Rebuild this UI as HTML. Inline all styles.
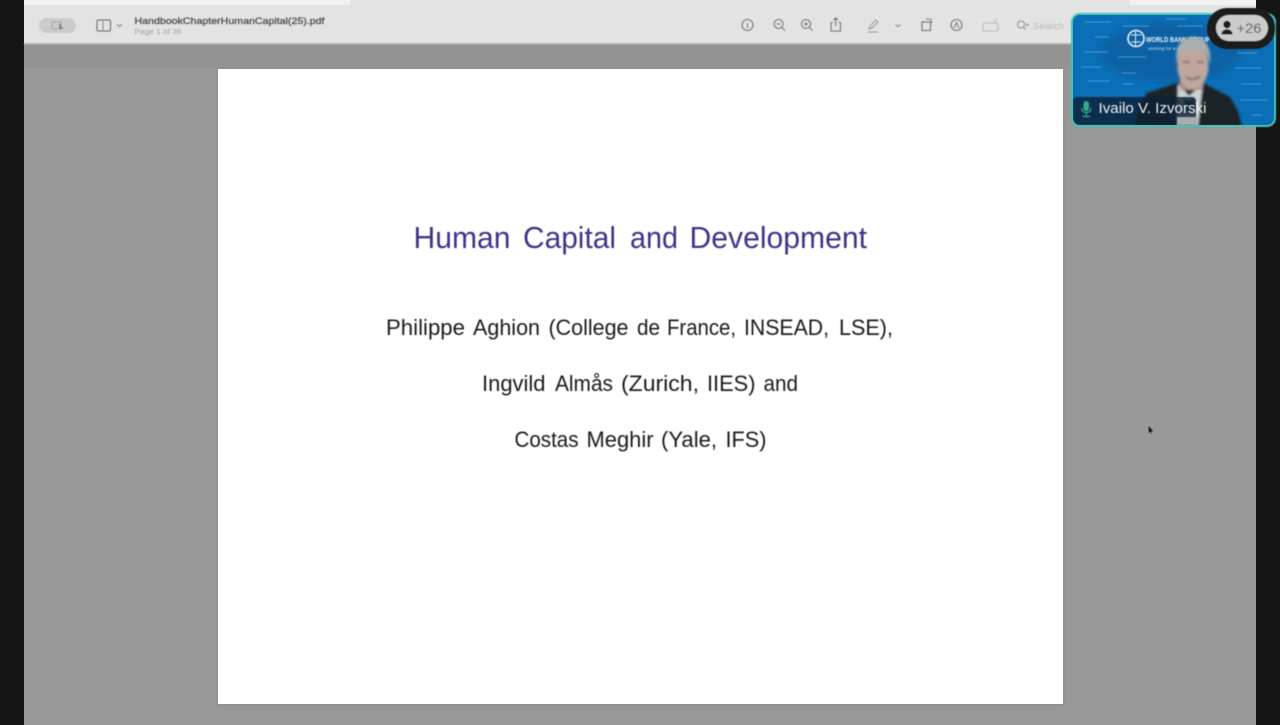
<!DOCTYPE html>
<html><head><meta charset="utf-8"><style>
html,body{margin:0;padding:0;background:#151515;width:1280px;height:725px;overflow:hidden}
svg{display:block}
text{font-family:"Liberation Sans",sans-serif}
.t{font-size:31px;fill:#3d3689}
.b{font-size:22.5px;fill:#1a1a1a}
</style></head><body>
<svg width="1280" height="725" viewBox="0 0 1280 725" xmlns="http://www.w3.org/2000/svg">
<defs>
<filter id="b1" x="-20%" y="-20%" width="140%" height="140%"><feGaussianBlur stdDeviation="0.5"/></filter>
<filter id="bt" x="-5%" y="-20%" width="110%" height="140%"><feGaussianBlur stdDeviation="0.42"/></filter>
<filter id="b2" x="-20%" y="-20%" width="140%" height="140%"><feGaussianBlur stdDeviation="1.4"/></filter>
<filter id="b3" x="-20%" y="-20%" width="140%" height="140%"><feGaussianBlur stdDeviation="3"/></filter>
<filter id="bs" x="-2%" y="-2%" width="104%" height="104%"><feGaussianBlur stdDeviation="1"/></filter>
<clipPath id="tile"><rect x="1073" y="15" width="201" height="110" rx="7"/></clipPath>
</defs>
<rect width="1280" height="725" fill="#151515"/>
<rect x="24" y="0" width="1232" height="725" fill="#989898"/>
<rect x="24" y="44" width="1232" height="24" fill="#939393"/>
<rect x="24" y="0" width="1232" height="6" fill="#f1f1f1"/>
<rect x="350" y="0" width="780" height="6" fill="#e4e4e4"/>
<rect x="24" y="5" width="1232" height="39" fill="#e3e3e3"/>
<rect x="24" y="43" width="1232" height="1.5" fill="#b5b5b5" filter="url(#b1)"/>
<rect x="217" y="68" width="847" height="637.500" fill="#8c8c8c" filter="url(#bs)"/>
<rect x="218" y="69" width="845" height="635" fill="#ffffff"/>

<g filter="url(#b1)">
<rect x="39" y="18" width="37" height="15" rx="7.500" fill="#cbcbcb"/>
<rect x="52" y="22" width="9" height="7" fill="none" stroke="#a5a5a5"/>
<path d="M60 24v4h3" stroke="#666" stroke-width="1.300" fill="none"/>
<rect x="97" y="20" width="13.500" height="11" rx="1.500" fill="none" stroke="#666" stroke-width="1"/>
<path d="M103 20v11" stroke="#888" stroke-width="1"/>
<path d="M117 24.500l2.500 2 2.500-2" stroke="#777" stroke-width="1" fill="none"/>
<text x="134.500" y="24" font-size="9.500" fill="#4a4a4a" stroke="#4a4a4a" stroke-width=".25" textLength="190" lengthAdjust="spacingAndGlyphs">HandbookChapterHumanCapital(25).pdf</text>
<text x="134.500" y="34" font-size="7.500" fill="#a0a0a0" textLength="47" lengthAdjust="spacingAndGlyphs">Page 1 of 36</text>

<g fill="none" stroke="#777" stroke-width="1.100">
<circle cx="747.500" cy="25" r="5.500"/>
<path d="M747.500 23v5" stroke-width="1"/>
<circle cx="778.500" cy="24" r="4.500"/><path d="M782 27.500l3 3M776.500 24h4"/>
<circle cx="806" cy="24" r="4.500"/><path d="M809.500 27.500l3 3M804 24h4M806 22v4"/>
<path d="M833 22.500h-2v8.500h9.500v-8.500h-2M835.700 26v-8M833.500 20l2.200-2.200 2.200 2.200"/>
<path d="M869 29l1-3 6-6 2 2-6 6zM868 32h10" stroke="#999"/>
<path d="M895.500 24.500l2.500 2 2.500-2" stroke="#888"/>
<rect x="922" y="22" width="8.500" height="8.500"/>
<path d="M926 19h4l1.500 1.500V23" stroke="#888"/>
<circle cx="956.500" cy="25" r="5.500"/>
<path d="M954 28l2.500-5.500L959 28" stroke-width="1"/>
<rect x="983" y="23" width="15" height="8" rx="1" stroke="#bbb"/>
<path d="M994 22l3-3" stroke="#bbb"/>
<circle cx="1021" cy="24.500" r="3.500" stroke="#939393"/>
<path d="M1023.500 27l2.500 2.500M1026 24l1.500 1.500 1.500-1.500" stroke="#939393"/>
</g>
<text x="1033" y="29" font-size="9" fill="#bcbcbc" textLength="31" lengthAdjust="spacingAndGlyphs">Search</text>
</g>

<g filter="url(#bt)">
<text class="t" x="413.500" y="248" textLength="97" lengthAdjust="spacingAndGlyphs">Human</text>
<text class="t" x="523" y="248" textLength="93" lengthAdjust="spacingAndGlyphs">Capital</text>
<text class="t" x="630" y="248" textLength="48" lengthAdjust="spacingAndGlyphs">and</text>
<text class="t" x="689.500" y="248" textLength="177.500" lengthAdjust="spacingAndGlyphs">Development</text>

<text class="b" x="386" y="335" textLength="79" lengthAdjust="spacingAndGlyphs">Philippe</text>
<text class="b" x="473" y="335" textLength="67" lengthAdjust="spacingAndGlyphs">Aghion</text>
<text class="b" x="548.500" y="335" textLength="80" lengthAdjust="spacingAndGlyphs">(College</text>
<text class="b" x="637" y="335" textLength="23" lengthAdjust="spacingAndGlyphs">de</text>
<text class="b" x="667" y="335" textLength="69" lengthAdjust="spacingAndGlyphs">France,</text>
<text class="b" x="744" y="335" textLength="85" lengthAdjust="spacingAndGlyphs">INSEAD,</text>
<text class="b" x="839" y="335" textLength="54" lengthAdjust="spacingAndGlyphs">LSE),</text>

<text class="b" x="482" y="391" textLength="63.500" lengthAdjust="spacingAndGlyphs">Ingvild</text>
<text class="b" x="555" y="391" textLength="58" lengthAdjust="spacingAndGlyphs">Almås</text>
<text class="b" x="621" y="391" textLength="78" lengthAdjust="spacingAndGlyphs">(Zurich,</text>
<text class="b" x="707" y="391" textLength="48.500" lengthAdjust="spacingAndGlyphs">IIES)</text>
<text class="b" x="763.500" y="391" textLength="34.500" lengthAdjust="spacingAndGlyphs">and</text>

<text class="b" x="514.500" y="447" textLength="64" lengthAdjust="spacingAndGlyphs">Costas</text>
<text class="b" x="586.500" y="447" textLength="67" lengthAdjust="spacingAndGlyphs">Meghir</text>
<text class="b" x="661" y="447" textLength="56" lengthAdjust="spacingAndGlyphs">(Yale,</text>
<text class="b" x="725.500" y="447" textLength="41" lengthAdjust="spacingAndGlyphs">IFS)</text>
</g>

<path d="M1148 424.500v10l2.200-2 1.400 3 1.400-.7-1.300-2.900h3z" fill="#111" stroke="#cfcfcf" stroke-width=".5" filter="url(#b1)"/>

<!-- video tile -->
<rect x="1071" y="13" width="205" height="114" rx="9" fill="#45c2b2" filter="url(#b1)"/>
<g clip-path="url(#tile)">
<rect x="1073" y="15" width="201" height="110" fill="#0b6fb7"/>
<ellipse cx="1170" cy="52" rx="70" ry="30" fill="#0a62a5" filter="url(#b3)"/>
<g stroke="#4c9fd6" stroke-width="1.200" filter="url(#b1)" opacity=".8">
<path d="M1084 22h27M1123 26h26M1166 19h20M1095 37h14M1084 52h24M1118 57h28M1081 67h20M1122 73h14M1088 81h22M1122 84h12M1237 53h20M1235 68h26M1241 84h20M1240 100h28M1252 115h10M1177 26h26"/>
</g>
<circle cx="1136" cy="38.500" r="8" fill="none" stroke="#e8f3fa" stroke-width="1.600" filter="url(#b1)"/>
<path d="M1131 35h10M1131 42h10M1135.500 31v15" stroke="#dcecf7" stroke-width="1" filter="url(#b1)"/>
<text x="1146" y="42" font-size="7.500" font-weight="700" fill="#e6f1f8" textLength="64" lengthAdjust="spacingAndGlyphs" filter="url(#b1)">WORLD BANK GROUP</text>
<text x="1148" y="50" font-size="4.500" fill="#bcd9ec" textLength="50" lengthAdjust="spacingAndGlyphs" filter="url(#b1)">working for a world free</text>
<g filter="url(#b2)">
<path d="M1135 126l4-20 8-13 30-10h26l27 14 8 14 4 15z" fill="#1d2227"/>
<path d="M1178 84l11 12 14-12-2 14-3 27h-21z" fill="#d0d3d4"/>
<path d="M1184 97l5 4 5-4 2 14h-12z" fill="#2a2c30"/>
<rect x="1180" y="74" width="22" height="16" fill="#ab938a"/>
<ellipse cx="1193" cy="66" rx="15.500" ry="23" fill="#bfa69c"/>
<path d="M1177 64c-3-18 5-27 16-27s19 9 17 27c-2-7-3-12-7-14-8 1-16 1-20 0-3 3-5 8-6 14z" fill="#a9afb1"/>
<path d="M1186 77c4 3 10 3 14-1" stroke="#7b5b52" stroke-width="1.800" fill="none"/>
<path d="M1183 62h7M1197 62h7" stroke="#7a6660" stroke-width="1.800"/>
</g>
<rect x="1073" y="97" width="123" height="28" rx="4" fill="#0a2238" opacity=".82" filter="url(#b1)"/>
<rect x="1177" y="117" width="21" height="8" fill="#a9adad" filter="url(#b1)"/>
</g>
<g filter="url(#b1)">
<rect x="1083.500" y="101" width="5.500" height="10" rx="2.700" fill="#31ab88"/>
<path d="M1081.500 108c0 6 9.500 6 9.500 0M1086.300 113v3M1082.500 116.500h7.500" stroke="#31ab88" stroke-width="1.200" fill="none"/>
<text x="1098.500" y="113" font-size="14.500" fill="#eef3f6" textLength="108" lengthAdjust="spacingAndGlyphs">Ivailo V. Izvorski</text>
</g>
<g filter="url(#b1)">
<rect x="1207" y="8" width="68" height="41" rx="20" fill="#1a1a1a"/>
<rect x="1216" y="15" width="52" height="26" rx="13" fill="#cccccc"/>
<circle cx="1227" cy="24.500" r="3.700" fill="#1c1c1c"/>
<path d="M1221.500 34.500c0-7 11-7 11 0z" fill="#1c1c1c"/>
<text x="1236.500" y="33" font-size="13.500" fill="#5a5a5a" textLength="25" lengthAdjust="spacingAndGlyphs">+26</text>
</g>
</svg>
</body></html>
